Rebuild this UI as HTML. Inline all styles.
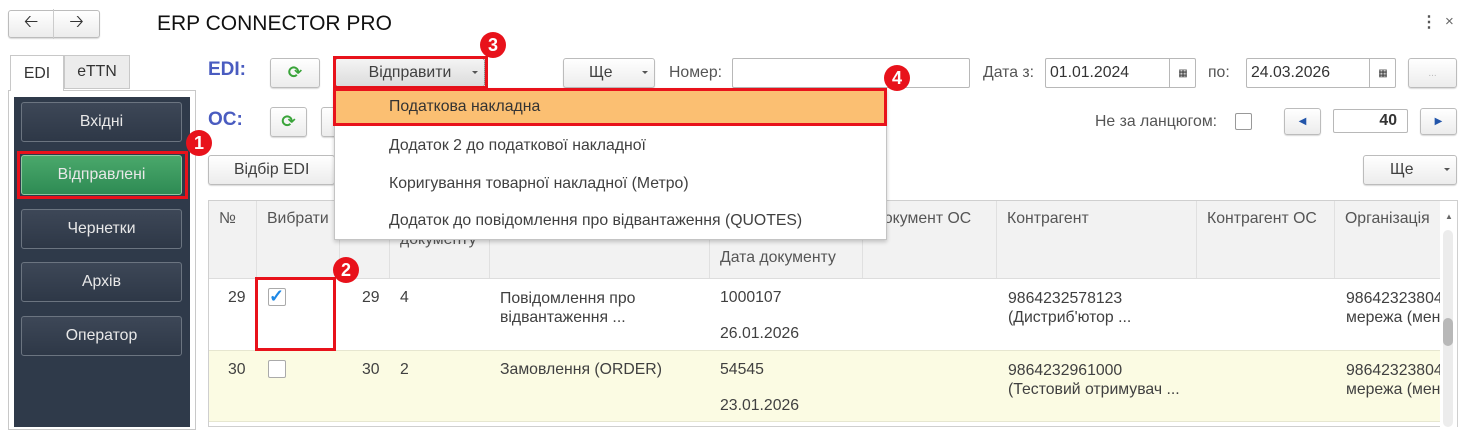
<!DOCTYPE html>
<html><head><meta charset="utf-8"><style>
*{box-sizing:border-box;margin:0;padding:0}
body{width:1467px;height:427px;overflow:hidden;background:#fff;font-family:"Liberation Sans Narrow","Liberation Sans",sans-serif;font-size:15.8px;color:#404040;position:relative}
.a{position:absolute}
.btn{position:absolute;border:1px solid #bcbcbc;border-radius:3px;background:linear-gradient(#fff,#ececec);box-shadow:0 1px 1px rgba(0,0,0,.15);display:flex;align-items:center;justify-content:center;color:#404040}
.inp{position:absolute;border:1px solid #b8b8b8;border-radius:2px;background:#fff;display:flex;align-items:center;padding-left:4px;color:#333}
.lb{position:absolute;color:#555}
.side{position:absolute;left:21px;width:161px;height:40px;border:1px solid #6b7480;border-radius:3px;background:linear-gradient(#3d4757,#2e3847);color:#e8e8e8;display:flex;align-items:center;justify-content:center}
.red{position:absolute;border:3px solid #e8121b}
.badge{position:absolute;width:26px;height:26px;border-radius:50%;background:#e8121b;color:#fff;font-family:"Liberation Sans",sans-serif;font-weight:bold;font-size:18px;display:flex;align-items:center;justify-content:center}
.th{position:absolute;top:201px;height:77px;background:#f2f2f2;border-right:1px solid #e0e0e0;padding:9px 0 0 10px;color:#555;white-space:nowrap;overflow:hidden}
.td{position:absolute;color:#404040;white-space:nowrap}
.ref{color:#3aa43a;font-weight:bold;font-size:17px;font-family:"DejaVu Sans",sans-serif}
.car{position:absolute;right:6px;top:12px;border-left:3px solid transparent;border-right:3px solid transparent;border-top:3px solid #555}
</style></head><body>
<div class="btn" style="left:8px;top:10px;width:92px;height:28px;font-size:18px;color:#333"><span style="width:46px;text-align:center;border-right:1px solid #ccc">&#129120;</span><span style="width:46px;text-align:center">&#129122;</span></div>
<div class="a" style="left:157px;top:12px;font-family:'Liberation Sans',sans-serif;font-size:21px;color:#111">ERP CONNECTOR PRO</div>
<div class="a" style="left:1421px;top:12px;font-size:16px;color:#555;font-weight:bold">&#8942;</div>
<div class="a" style="left:1445px;top:13px;font-size:15px;color:#666">×</div>

<div class="a" style="left:8px;top:90px;width:188px;height:340px;border:1px solid #c8c8c8"></div>
<div class="a" style="left:10px;top:55px;width:54px;height:36px;background:#fff;border:1px solid #c8c8c8;border-bottom:none;display:flex;align-items:center;justify-content:center;color:#333">EDI</div>
<div class="a" style="left:64px;top:55px;width:66px;height:34px;background:#ececec;border:1px solid #c8c8c8;display:flex;align-items:center;justify-content:center;color:#333">eTTN</div>
<div class="a" style="left:14px;top:97px;width:176px;height:330px;background:#2f3a4a"></div>
<div class="side" style="top:102px">Вхідні</div>
<div class="side" style="top:155px;background:linear-gradient(#4aa86b,#2e8b54);border-color:#8fc7a0">Відправлені</div>
<div class="side" style="top:209px">Чернетки</div>
<div class="side" style="top:262px">Архів</div>
<div class="side" style="top:316px">Оператор</div>
<div class="red" style="left:17px;top:151px;width:171px;height:48px"></div>
<div class="badge" style="left:186px;top:130px">1</div>

<div class="a" style="left:208px;top:59px;color:#4a5cc0;font-weight:bold;font-size:19px;font-family:'Liberation Sans',sans-serif">EDI:</div>
<div class="btn" style="left:270px;top:58px;width:50px;height:30px"><span class="ref">&#10227;</span></div>
<div class="btn" style="left:335px;top:58px;width:150px;height:29px;background:linear-gradient(#f4f4f4,#dcdcdc);border:1px dotted #555">Відправити<span class="car"></span></div>
<div class="red" style="left:333px;top:56px;width:155px;height:33px"></div>
<div class="badge" style="left:480px;top:32px">3</div>
<div class="btn" style="left:563px;top:58px;width:92px;height:30px;justify-content:flex-start;padding-left:25px">Ще<span class="car"></span></div>
<div class="lb" style="left:669px;top:64px">Номер:</div>
<div class="inp" style="left:732px;top:58px;width:238px;height:30px"></div>
<div class="lb" style="left:983px;top:64px">Дата з:</div>
<div class="inp" style="left:1045px;top:58px;width:151px;height:30px">01.01.2024<span style="position:absolute;left:123px;top:0;height:28px;border-left:1px solid #b8b8b8;width:27px;display:flex;align-items:center;justify-content:center;font-size:10px">&#9638;</span></div>
<div class="lb" style="left:1208px;top:64px">по:</div>
<div class="inp" style="left:1246px;top:58px;width:150px;height:30px">24.03.2026<span style="position:absolute;left:122px;top:0;height:28px;border-left:1px solid #b8b8b8;width:27px;display:flex;align-items:center;justify-content:center;font-size:10px">&#9638;</span></div>
<div class="btn" style="left:1408px;top:58px;width:49px;height:30px;color:#bbb;font-size:10px">...</div>

<div class="a" style="left:208px;top:109px;color:#4a5cc0;font-weight:bold;font-size:19px;font-family:'Liberation Sans',sans-serif">ОС:</div>
<div class="btn" style="left:270px;top:107px;width:37px;height:30px"><span class="ref">&#10227;</span></div>
<div class="btn" style="left:321px;top:107px;width:20px;height:30px"></div>
<div class="lb" style="left:1095px;top:113px">Не за ланцюгом:</div>
<div class="a" style="left:1235px;top:113px;width:17px;height:17px;border:1px solid #999;border-radius:2px;background:#fff"></div>
<div class="btn" style="left:1284px;top:108px;width:37px;height:27px;color:#2255aa;font-size:10px">&#9664;</div>
<div class="inp" style="left:1333px;top:109px;width:75px;height:24px;justify-content:flex-end;padding-right:10px;font-weight:bold;color:#333">40</div>
<div class="btn" style="left:1420px;top:108px;width:37px;height:27px;color:#2255aa;font-size:10px">&#9654;</div>

<div class="btn" style="left:208px;top:155px;width:127px;height:30px;justify-content:flex-start;padding-left:25px">Відбір EDI</div>
<div class="btn" style="left:1363px;top:155px;width:94px;height:30px;justify-content:flex-start;padding-left:26px">Ще<span class="car"></span></div>

<div class="a" style="left:208px;top:200px;width:1250px;height:227px;border:1px solid #cfcfcf"></div>
<div class="th" style="left:209px;width:48px">№</div>
<div class="th" style="left:257px;width:83px">Вибрати</div>
<div class="th" style="left:340px;width:50px"></div>
<div class="th" style="left:390px;width:100px;padding-top:30px">документу</div>
<div class="th" style="left:490px;width:220px"></div>
<div class="th" style="left:710px;width:153px;padding-top:48px">Дата документу</div>
<div class="th" style="left:863px;width:134px">Документ ОС</div>
<div class="th" style="left:997px;width:200px">Контрагент</div>
<div class="th" style="left:1197px;width:138px">Контрагент ОС</div>
<div class="th" style="left:1335px;width:105px;border-right:none">Організація</div>
<div class="a" style="left:1440px;top:201px;width:17px;height:226px;background:#fff"></div>
<div class="a" style="left:1445px;top:212px;font-size:8px;color:#666">&#9650;</div>
<div class="a" style="left:1443px;top:230px;width:10px;height:197px;background:#ececec;border-radius:5px"></div>
<div class="a" style="left:1443px;top:318px;width:10px;height:28px;background:#b8b8b8;border-radius:5px"></div>
<div class="a" style="left:209px;top:278px;width:1231px;height:1px;background:#ddd"></div>

<div class="a" style="left:209px;top:350px;width:1231px;height:72px;background:#fbfbe3;border-top:1px solid #e6e6d0;border-bottom:1px solid #e6e6d0"></div>
<div class="td" style="left:228px;top:289px">29</div>
<div class="a" style="left:268px;top:288px;width:18px;height:18px;border:1px solid #aaa;border-radius:2px;background:#fff;color:#1e88e5;font-size:18px;line-height:14px;font-weight:bold">&#10003;</div>
<div class="td" style="left:362px;top:289px">29</div>
<div class="td" style="left:400px;top:289px">4</div>
<div class="td" style="left:500px;top:289px;line-height:19px">Повідомлення про<br>відвантаження ...</div>
<div class="td" style="left:720px;top:289px">1000107</div>
<div class="td" style="left:720px;top:325px">26.01.2026</div>
<div class="td" style="left:1008px;top:289px;line-height:19px">9864232578123<br>(Дистриб'ютор ...</div>
<div class="td" style="left:1346px;top:289px;line-height:19px;width:94px;overflow:hidden">98642323804<br>мережа (мен</div>

<div class="td" style="left:228px;top:361px">30</div>
<div class="a" style="left:268px;top:360px;width:18px;height:18px;border:1px solid #aaa;border-radius:2px;background:#fff"></div>
<div class="td" style="left:362px;top:361px">30</div>
<div class="td" style="left:400px;top:361px">2</div>
<div class="td" style="left:500px;top:361px">Замовлення (ORDER)</div>
<div class="td" style="left:720px;top:361px">54545</div>
<div class="td" style="left:720px;top:397px">23.01.2026</div>
<div class="td" style="left:1008px;top:361px;line-height:19px">9864232961000<br>(Тестовий отримувач ...</div>
<div class="td" style="left:1346px;top:361px;line-height:19px;width:94px;overflow:hidden">98642323804<br>мережа (мен</div>
<div class="red" style="left:255px;top:277px;width:81px;height:74px"></div>
<div class="badge" style="left:333px;top:257px">2</div>

<div class="a" style="left:334px;top:88px;width:553px;height:152px;background:#fff;border:1px solid #c4c4c4;box-shadow:0 2px 4px rgba(0,0,0,.2)"></div>
<div class="a" style="left:335px;top:90px;width:551px;height:34px;background:#fbbf72"></div>
<div class="td" style="left:389px;top:98px;color:#333">Податкова накладна</div>
<div class="td" style="left:389px;top:137px">Додаток 2 до податкової накладної</div>
<div class="td" style="left:389px;top:175px">Коригування товарної накладної (Метро)</div>
<div class="td" style="left:389px;top:212px">Додаток до повідомлення про відвантаження (QUOTES)</div>
<div class="red" style="left:333px;top:88px;width:554px;height:38px"></div>
<div class="badge" style="left:884px;top:65px">4</div>
</body></html>
